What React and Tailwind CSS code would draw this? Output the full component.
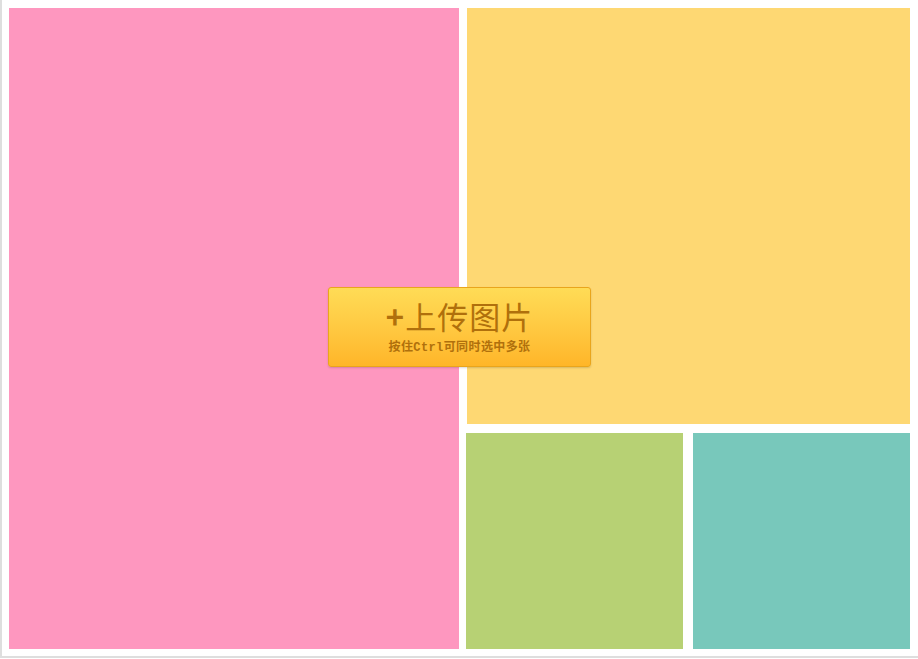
export default function App() {
  return (
    <div className="w-[918px] h-[659px] bg-white relative" style={{ fontFamily: '"Liberation Sans", "Noto Sans CJK SC", sans-serif' }}>
      <div className="h-[658px] border-l-2 border-b-2 border-[#dedede] flex gap-[7px] pl-[7px] pt-[8px] pr-[8px] pb-[7px]">
        <div className="w-[450px] bg-[#fe97bf]" />
        <div className="flex-1 flex flex-col gap-[9px]">
          <div className="h-[416px] bg-[#fed873] ml-[1px]" />
          <div className="flex-1 flex gap-[10px]">
            <div className="w-[217px] bg-[#b7d174]" />
            <div className="flex-1 bg-[#78c8bb]" />
          </div>
        </div>
      </div>

      <button className="absolute left-[328px] top-[287px] w-[263px] h-[80px] rounded-[3px] border border-[#e9a51c] bg-gradient-to-b from-[#ffdc56] to-[#ffb628] shadow-[0_1px_2px_rgba(0,0,0,0.15)] flex flex-col items-center justify-center">
        <span className="text-[31px] leading-[34px] text-[#b0700c] tracking-[1px] mt-[1px]" style={{ fontFamily: '"Noto Sans CJK SC", sans-serif' }}>
          <span className="font-bold">+</span>上传图片
        </span>
        <span className="text-[12px] leading-[16px] font-bold text-[#b0700c] mt-[7px] tracking-[0.4px]" style={{ fontFamily: '"Liberation Mono", "Noto Sans CJK SC", monospace' }}>
          按住Ctrl可同时选中多张
        </span>
      </button>
    </div>
  );
}
